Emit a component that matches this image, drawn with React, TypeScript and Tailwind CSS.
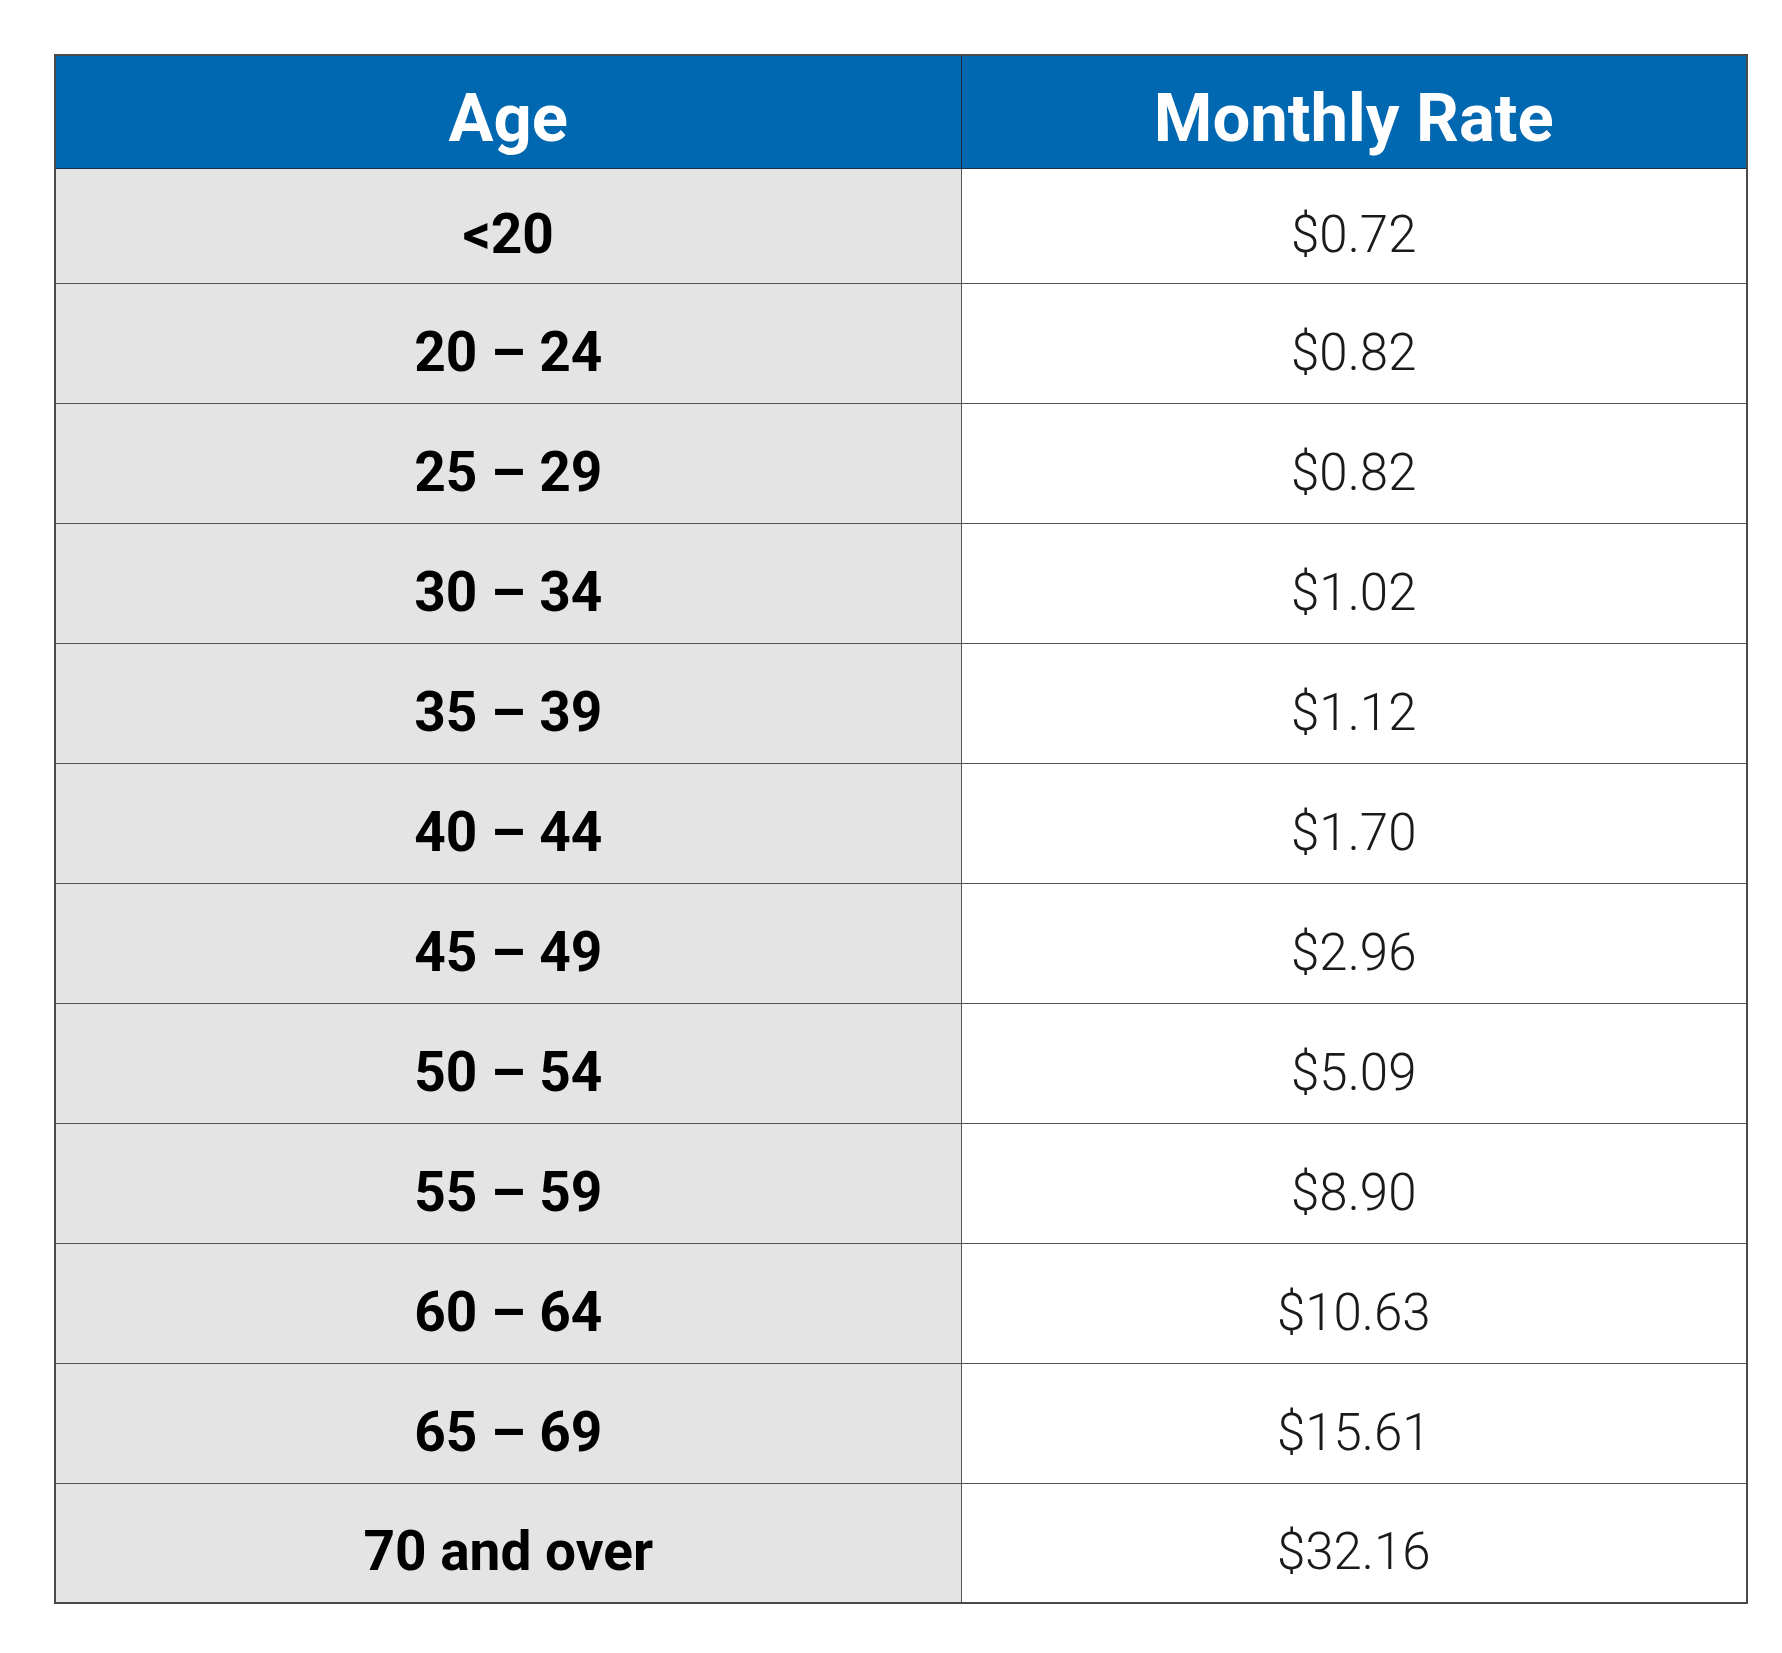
const rows: [string, string][] = [
  ["<20", "$0.72"],
  ["20 – 24", "$0.82"],
  ["25 – 29", "$0.82"],
  ["30 – 34", "$1.02"],
  ["35 – 39", "$1.12"],
  ["40 – 44", "$1.70"],
  ["45 – 49", "$2.96"],
  ["50 – 54", "$5.09"],
  ["55 – 59", "$8.90"],
  ["60 – 64", "$10.63"],
  ["65 – 69", "$15.61"],
  ["70 and over", "$32.16"],
];

export default function App() {
  return (
    <div className="min-h-[1653px] w-[1782px] bg-white pl-[54px] pt-[54px] font-['Roboto',sans-serif]">
      <table className="w-[1694px] border-collapse border-2 border-[#4a4a4a]">
        <thead>
          <tr className="h-[113px] bg-[#0067b1] text-white">
            <th className="w-[906px] border border-[#1b2f4a] pt-[14px] text-[67px] font-bold leading-none">
              Age
            </th>
            <th className="border border-[#1b2f4a] pt-[14px] text-[67px] font-bold leading-none">
              Monthly Rate
            </th>
          </tr>
        </thead>
        <tbody>
          {rows.map(([age, rate], i) => (
            <tr key={age} className={i === 0 ? "h-[115px]" : "h-[120px]"}>
              <td className="border border-[#555] bg-[#e4e4e4] pt-[18px] text-center text-[55px] font-bold leading-none text-black">
                {age}
              </td>
              <td className="border border-[#555] bg-white pt-[18px] text-center text-[51px] font-light leading-none text-[#1a1a1a]">
                {rate}
              </td>
            </tr>
          ))}
        </tbody>
      </table>
    </div>
  );
}
